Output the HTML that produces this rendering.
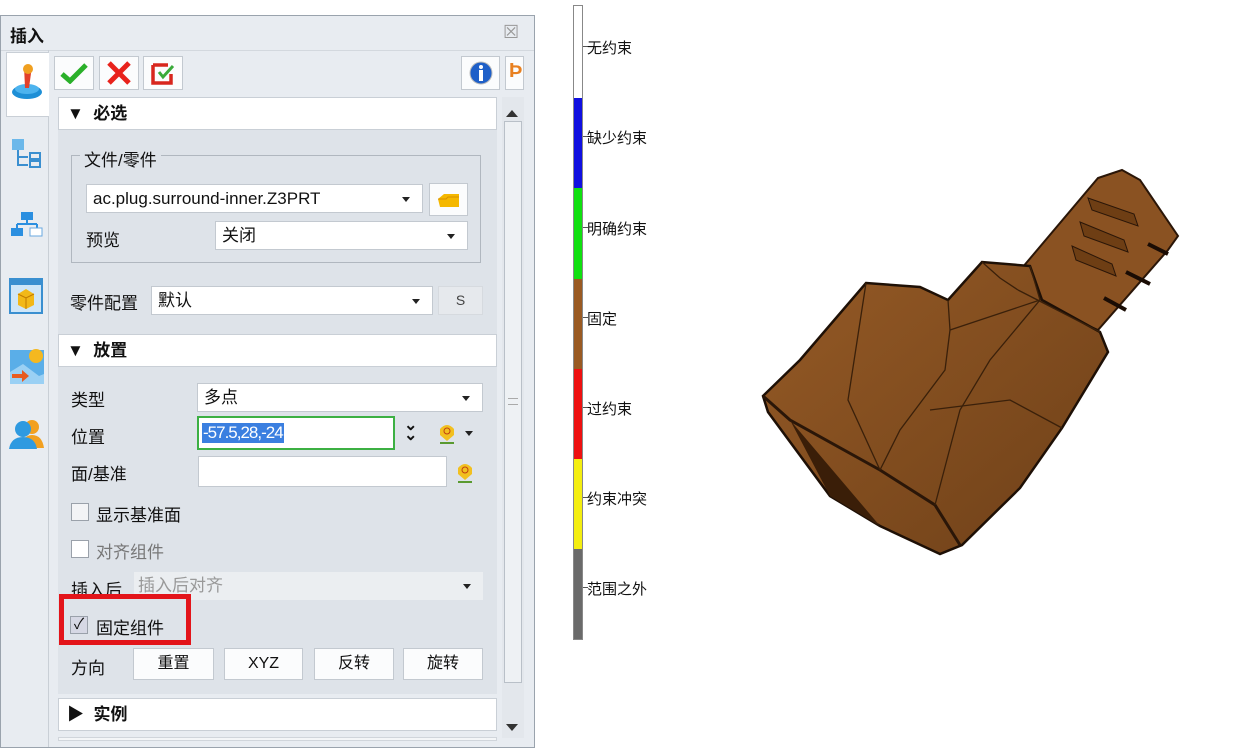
<!DOCTYPE html>
<html><head><meta charset="utf-8"><style>
*{margin:0;padding:0;box-sizing:border-box}
body{width:1250px;height:750px;background:#fff;position:relative;overflow:hidden;font-family:"Liberation Sans","Noto Sans CJK SC",sans-serif;font-size:16px;color:#111}
.a{position:absolute}
.panel{left:0;top:15px;width:535px;height:733px;background:#e8ecf1;border:1px solid #9aa3ad}
.btn{background:#fbfcfd;border:1px solid #c3c9d0}
.hdr{background:#fff;border:1px solid #c9cfd6;font-weight:bold;font-size:17px;padding-left:8px;line-height:31px}
.box{background:#fff;border:1px solid #c3c9d0;font-size:17px;padding-left:6px}
.dd::after{content:"";position:absolute;right:12px;top:50%;margin-top:-2px;border:4px solid transparent;border-top:5px solid #222}
.lbl{font-size:17px}
.cb{width:18px;height:18px;border:1px solid #9aa1aa;background:#f3f4f6}
.sb{font-size:16px;text-align:center}
.leg{font-size:15px;left:587px}
.tk{left:583px;width:5px;height:1px;background:#555}
</style></head><body>
<div class="a panel"></div>
<div class="a" style="left:10px;top:22px;font-size:17px;font-weight:bold">插入</div>
<div class="a" style="left:503px;top:22px;font-size:18px;color:#999">☒</div>
<div class="a" style="left:1px;top:50px;width:533px;height:1px;background:#d3d8de"></div>
<div class="a" style="left:48px;top:50px;width:1px;height:697px;background:#c9cfd6"></div>
<div class="a" style="left:6px;top:52px;width:43px;height:65px;background:#fff;border:1px solid #c9cfd6;border-right:none"></div>
<svg class="a" style="left:10px;top:62px" width="34" height="40" viewBox="0 0 34 40"><ellipse cx="17" cy="30" rx="15" ry="7" fill="#1e8fd6"/><ellipse cx="17" cy="27" rx="12" ry="5" fill="#4db3ee"/><path d="M14 4 L22 4 L19 26 L15 26Z" fill="#e2402a"/><circle cx="18" cy="7" r="5" fill="#f0a020"/></svg>
<svg class="a" style="left:10px;top:137px" width="34" height="34"><rect x="2" y="2" width="12" height="11" fill="#6cb8ea"/><path d="M8 13 V28 H18 M8 20 H18" stroke="#3a8fd0" stroke-width="2" fill="none"/><rect x="20" y="16" width="10" height="6" fill="none" stroke="#3a8fd0" stroke-width="2"/><rect x="20" y="24" width="10" height="6" fill="none" stroke="#3a8fd0" stroke-width="2"/></svg>
<svg class="a" style="left:10px;top:210px" width="34" height="30"><rect x="11" y="2" width="12" height="8" fill="#2b8fe0"/><path d="M17 10 V14 M7 14 H27 M7 14 V18 M27 14V18" stroke="#2b8fe0" stroke-width="2"/><rect x="1" y="18" width="12" height="8" fill="#2b8fe0"/><rect x="20" y="18" width="12" height="8" fill="#fff" stroke="#6aa8e0"/></svg>
<svg class="a" style="left:9px;top:278px" width="34" height="36"><rect x="1" y="1" width="32" height="34" fill="#cfe6f8" stroke="#3a8fd0" stroke-width="2"/><rect x="1" y="1" width="32" height="6" fill="#3a8fd0"/><path d="M9 16 L17 11 L25 16 L25 27 L17 31 L9 27Z" fill="#f2b818"/><path d="M9 16 L17 20 L25 16 M17 20V31" stroke="#c07a00" fill="none"/></svg>
<svg class="a" style="left:9px;top:346px" width="36" height="38"><rect x="1" y="4" width="34" height="34" fill="#5aaee8"/><circle cx="27" cy="10" r="7" fill="#f4b820"/><path d="M1 26 L14 18 L30 30 L35 28 V38 H1Z" fill="#9ad0f4"/><path d="M3 28 H13 L13 24 L20 30 L13 36 L13 32 H3Z" fill="#e85b20"/></svg>
<svg class="a" style="left:9px;top:418px" width="36" height="32"><circle cx="23" cy="9" r="7" fill="#f2a020"/><path d="M12 30 Q14 17 23 17 Q33 17 35 30Z" fill="#f2a020"/><circle cx="14" cy="11" r="8" fill="#2f9ae0"/><path d="M0 31 Q2 19 14 19 Q26 19 28 31Z" fill="#2f9ae0"/></svg>
<div class="a btn" style="left:54px;top:56px;width:40px;height:34px"></div>
<svg class="a" style="left:60px;top:62px" width="28" height="22"><path d="M2 12 L10 19 L26 3" stroke="#2ab02a" stroke-width="5" fill="none"/></svg>
<div class="a btn" style="left:99px;top:56px;width:40px;height:34px"></div>
<svg class="a" style="left:106px;top:60px" width="26" height="26"><path d="M3 3 L23 23 M23 3 L3 23" stroke="#e8221c" stroke-width="5"/></svg>
<div class="a btn" style="left:143px;top:56px;width:40px;height:34px"></div>
<svg class="a" style="left:151px;top:62px" width="26" height="24"><path d="M2 3 H17 M2 3 V21 H20 V12" stroke="#d8261e" stroke-width="3.5" fill="none"/><path d="M8 10 L12 15 L22 4" stroke="#3aaa3a" stroke-width="3" fill="none"/></svg>
<div class="a btn" style="left:461px;top:56px;width:39px;height:34px"></div>
<svg class="a" style="left:469px;top:61px" width="24" height="24"><circle cx="12" cy="12" r="11" fill="#1e5fc8" stroke="#bbb"/><rect x="10" y="9" width="4" height="11" fill="#fff"/><circle cx="12" cy="6" r="2" fill="#fff"/></svg>
<div class="a btn" style="left:505px;top:56px;width:19px;height:34px"></div>
<div class="a" style="left:509px;top:60px;font-size:20px;font-weight:bold;color:#e88020">Þ</div>
<div class="a" style="left:502px;top:97px;width:22px;height:641px;background:#e3e7ec"></div>
<div class="a" style="left:506px;top:104px;border:6px solid transparent;border-bottom:7px solid #333"></div>
<div class="a" style="left:504px;top:121px;width:18px;height:562px;background:#eef1f4;border:1px solid #b9c0c8"></div>
<div class="a" style="left:508px;top:398px;width:10px;height:7px;border-top:1px solid #aaa;border-bottom:1px solid #aaa"></div>
<div class="a" style="left:506px;top:724px;border:6px solid transparent;border-top:7px solid #333"></div>
<div class="a" style="left:58px;top:130px;width:439px;height:204px;background:#dee3e9"></div>
<div class="a hdr" style="left:58px;top:97px;width:439px;height:33px">▼&nbsp; 必选</div>
<div class="a" style="left:71px;top:155px;width:410px;height:108px;border:1px solid #b0b7bf"></div>
<div class="a lbl" style="left:80px;top:146px;background:#dee3e9;padding:0 4px">文件/零件</div>
<div class="a box dd" style="left:86px;top:184px;width:337px;height:29px;line-height:27px">ac.plug.surround-inner.Z3PRT</div>
<div class="a btn" style="left:429px;top:183px;width:39px;height:33px"></div>
<svg class="a" style="left:437px;top:192px" width="24" height="16"><path d="M1 7 L7 2 H22 V15 H3Z" fill="#f5b800"/><path d="M1 7 H9 L11 5 H22" stroke="#d89000" fill="none"/></svg>
<div class="a lbl" style="left:86px;top:226px">预览</div>
<div class="a box dd" style="left:215px;top:221px;width:253px;height:29px;line-height:27px">关闭</div>
<div class="a lbl" style="left:70px;top:289px">零件配置</div>
<div class="a box dd" style="left:151px;top:286px;width:282px;height:29px;line-height:27px">默认</div>
<div class="a" style="left:438px;top:286px;width:45px;height:29px;background:#e6e9ed;border:1px solid #d6dadf;text-align:center;line-height:27px;font-size:14px;color:#444">S</div>
<div class="a" style="left:58px;top:366px;width:439px;height:328px;background:#dee3e9"></div>
<div class="a hdr" style="left:58px;top:334px;width:439px;height:33px">▼&nbsp; 放置</div>
<div class="a lbl" style="left:71px;top:386px">类型</div>
<div class="a box dd" style="left:197px;top:383px;width:286px;height:29px;line-height:27px">多点</div>
<div class="a lbl" style="left:71px;top:423px">位置</div>
<div class="a" style="left:197px;top:416px;width:198px;height:34px;background:#fff;border:2px solid #3cb043"></div>
<div class="a" style="left:202px;top:423px;background:#3b7fe0;color:#fff;font-size:17px;line-height:20px;padding:0 1px;letter-spacing:-1px">-57.5,28,-24</div>
<div class="a" style="left:404px;top:421px;font-size:16px;font-weight:bold;line-height:10px">⌄<br>⌄</div>
<svg class="a" style="left:437px;top:421px" width="20" height="24"><path d="M3 8 Q10 0 17 8 L17 14 L10 20 L3 14Z" fill="#f2c020"/><circle cx="10" cy="10" r="3" fill="none" stroke="#c04010"/><path d="M3 22 H17" stroke="#5a9a30" stroke-width="2"/></svg>
<div class="a" style="left:465px;top:431px;border:4px solid transparent;border-top:5px solid #222"></div>
<div class="a lbl" style="left:71px;top:460px">面/基准</div>
<div class="a box" style="left:198px;top:456px;width:249px;height:31px"></div>
<svg class="a" style="left:455px;top:460px" width="20" height="24"><path d="M3 8 Q10 0 17 8 L17 14 L10 20 L3 14Z" fill="#f2c020"/><circle cx="10" cy="10" r="3" fill="none" stroke="#c04010"/><path d="M3 22 H17" stroke="#5a9a30" stroke-width="2"/></svg>
<div class="a cb" style="left:71px;top:503px"></div>
<div class="a lbl" style="left:96px;top:501px">显示基准面</div>
<div class="a cb" style="left:71px;top:540px;background:#fff"></div>
<div class="a lbl" style="left:96px;top:538px;color:#777">对齐组件</div>
<div class="a lbl" style="left:71px;top:576px">插入后</div>
<div class="a dd" style="left:134px;top:572px;width:349px;height:28px;background:#ebeef1;color:#999;padding-left:4px;line-height:28px;font-size:17px">插入后对齐</div>
<div class="a" style="left:59px;top:594px;width:132px;height:51px;border:5px solid #e3141a;background:#dee3e9"></div>
<div class="a cb" style="left:70px;top:616px;background:#d6d8e4;text-align:center;line-height:16px;font-size:15px">✓</div>
<div class="a lbl" style="left:96px;top:614px">固定组件</div>
<div class="a lbl" style="left:71px;top:654px">方向</div>
<div class="a btn sb" style="left:133px;top:648px;width:81px;height:32px;line-height:30px">重置</div>
<div class="a btn sb" style="left:224px;top:648px;width:79px;height:32px;line-height:30px">XYZ</div>
<div class="a btn sb" style="left:314px;top:648px;width:80px;height:32px;line-height:30px">反转</div>
<div class="a btn sb" style="left:403px;top:648px;width:80px;height:32px;line-height:30px">旋转</div>
<div class="a hdr" style="left:58px;top:698px;width:439px;height:33px">▶&nbsp; 实例</div>
<div class="a" style="left:58px;top:737px;width:439px;height:4px;background:#f4f6f8;border:1px solid #d0d5db"></div>
<div class="a" style="left:573px;top:5px;width:10px;height:635px;border:1px solid #888;background:linear-gradient(#fff 0 92px,#1010e0 92px 182px,#10e010 182px 273px,#9a5a22 273px 363px,#ee1010 363px 453px,#f4ee10 453px 543px,#6a6a6a 543px)"></div>
<div class="a tk" style="top:46px"></div><div class="a tk" style="top:136px"></div><div class="a tk" style="top:227px"></div><div class="a tk" style="top:317px"></div><div class="a tk" style="top:407px"></div><div class="a tk" style="top:497px"></div><div class="a tk" style="top:587px"></div>
<div class="a leg" style="top:37px">无约束</div>
<div class="a leg" style="top:127px">缺少约束</div>
<div class="a leg" style="top:218px">明确约束</div>
<div class="a leg" style="top:308px">固定</div>
<div class="a leg" style="top:398px">过约束</div>
<div class="a leg" style="top:488px">约束冲突</div>
<div class="a leg" style="top:578px">范围之外</div>
<svg class="a" style="left:0;top:0" width="1250" height="750">
<defs><linearGradient id="g1" x1="0" y1="0" x2="1" y2="1"><stop offset="0" stop-color="#955a26"/><stop offset="1" stop-color="#6e4018"/></linearGradient></defs>
<path d="M1022 268 L1098 178 L1122 170 L1140 180 L1178 236 L1168 250 L1098 330 L1040 305Z" fill="#8a5222" stroke="#2a1608" stroke-width="2"/>
<g fill="#6e3e14" stroke="#2a1608"><path d="M1088 198 L1134 214 L1138 226 L1092 210Z"/><path d="M1080 222 L1124 240 L1128 252 L1084 236Z"/><path d="M1072 246 L1112 264 L1116 276 L1076 260Z"/></g>
<g stroke="#1a0c04" stroke-width="4"><path d="M1148 244 L1168 254"/><path d="M1126 272 L1150 284"/><path d="M1104 298 L1126 310"/></g>
<path d="M866 283 L920 287 L948 300 L982 262 L1030 266 L1042 300 L1100 332 L1108 352 L1062 428 L1020 488 L962 545 L940 554 L880 526 L830 496 L768 412 L763 396 L800 360Z" fill="url(#g1)" stroke="#1e1006" stroke-width="2.5"/>
<path d="M763 396 L790 420 L880 470 L935 505 L960 545" fill="none" stroke="#2a1608" stroke-width="3"/>
<path d="M790 420 L830 496 L880 526" fill="#3a1e08"/>
<g fill="none" stroke="#3a200a" stroke-width="1.3"><path d="M866 283 L848 400 L880 470"/><path d="M948 300 L950 330 L945 370 L900 430 L880 470"/><path d="M1030 266 L1040 300 L990 360 L960 410 L935 505"/><path d="M950 330 L1040 300"/><path d="M930 410 L1010 400 L1062 428"/><path d="M1018 290 L1100 332"/><path d="M982 262 L1000 278 L1018 290"/></g>
</svg>
</body></html>
